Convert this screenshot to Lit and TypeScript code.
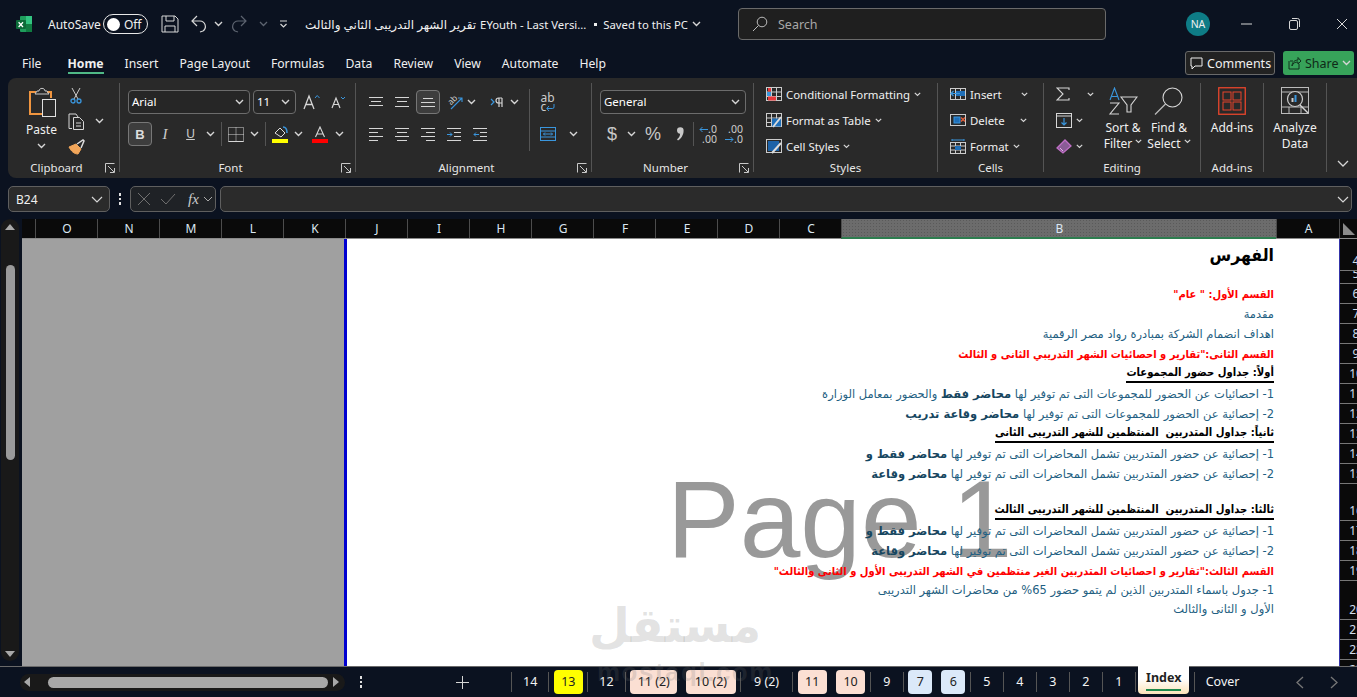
import { LitElement, css, html, svg } from "lit";
import { customElement } from "lit/decorators.js";

const UI = '#d6d6d6';
const BLUE = '#3a96dd';

const ic = (w: number, h: number, body: unknown) => html`<svg width=${w} height=${h} viewBox="0 0 ${w} ${h}" fill="none" stroke=${UI} stroke-width="1">${body}</svg>`;
const chev = () => ic(9, 6, svg`<path d="M1 1l3.5 3.5L8 1" stroke-width="1.4"/>`);
const chevS = () => ic(7, 5, svg`<path d="M.8 .8l2.700 2.700L6.200 .8" stroke-width="1.2"/>`);
const launcher = () => html`<span class="launch">${ic(10, 10, svg`<path d="M.5 9.5v-9h9M3 3l6 6M5 9.5h4.5V5" stroke="#c8c8c8"/>`)}</span>`;
const lines = (ys: number[], x: number[][]) => svg`${ys.map((y, i) => svg`<path d="M${x[i][0]} ${y}H${x[i][1]}"/>`)}`;

const icons = {
  excel: ic(18, 18, svg`<rect x="5" y="1" width="12" height="16" rx="1" fill="#1f9d5c" stroke="none"/><rect x="11" y="1" width="6" height="8" fill="#33c481" stroke="none"/><rect x="11" y="9" width="6" height="8" fill="#107c41" stroke="none"/><rect x="1" y="5" width="10" height="9" rx="1" fill="#0c6b38" stroke="none"/><path d="M3.6 7.2l4.4 4.8M8 7.2l-4.4 4.8" stroke="#fff" stroke-width="1.3"/>`),
  save: ic(18, 18, svg`<path d="M1 1h13l3 3v13H1zM5 1v5h8V1M4 17v-6h10v6"/>`),
  undo: ic(18, 18, svg`<path d="M7 1L2 6l5 5M2 6h8a5.500 5.500 0 0 1 3 10l-3 1" stroke-width="1.2"/>`),
  redo: ic(18, 18, svg`<path d="M11 1l5 5-5 5M16 6H8a5.500 5.500 0 0 0-3 10l3 1" stroke="#5d6470" stroke-width="1.2"/>`),
  customize: ic(9, 8, svg`<path d="M1 1h7M1.500 4l3 3 3-3" stroke-width="1.2"/>`),
  search: ic(16, 16, svg`<circle cx="10" cy="6" r="4.800" stroke="#bbb"/><path d="M6.500 9.500L1 15" stroke="#bbb"/>`),
  min: ic(11, 2, svg`<path d="M0 1h11"/>`),
  restore: ic(11, 12, svg`<rect x=".5" y="2.500" width="8" height="9" rx="1.500"/><path d="M3 .5h5.500a2 2 0 0 1 2 2V9"/>`),
  close: ic(12, 12, svg`<path d="M1 1l10 10M11 1L1 11"/>`),
  comment: ic(13, 13, svg`<path d="M1 1h11v8H5l-3 3V9H1z" stroke="#eee"/>`),
  share: ic(14, 14, svg`<path d="M2 5h3M1 5v8h10V8M4 10c0-4 3-6 6-6V1.500L13 5l-3 3V6c-3 0-5 1-6 4z" stroke="#10301c"/>`),
  paste: ic(28, 30, svg`<path d="M7 5H1v22h12" stroke="#f0953f" stroke-width="2"/><path d="M18 5h4v6" stroke="#f0953f" stroke-width="2"/><path d="M6 7l2-3h2c0-3.500 6-3.500 6 0h2l2 3z" stroke="#c8c8c8"/><rect x="13.500" y="12.500" width="13" height="17" stroke="#e0e0e0"/>`),
  cut: ic(12, 17, svg`<path d="M2 1l6 11M10 1L4 12" stroke="#ccc"/><circle cx="3" cy="14" r="2" stroke="${BLUE}" stroke-width="1.300"/><circle cx="9" cy="14" r="2" stroke="${BLUE}" stroke-width="1.300"/>`),
  copy: ic(17, 17, svg`<path d="M4 15.500H1V1h7l2 3"/><path d="M5.500 4.500h6l4 4v8h-10zM8 10h5M8 13h5"/>`),
  painter: ic(17, 16, svg`<path d="M1 8l7-3 5 5-3 5C6 15 3 12 1 8z" fill="#f2a65a" stroke="#f2a65a"/><path d="M9 5l6-4 1 1-3 7" stroke="#ddd" stroke-width="1.500"/>`),
  grow: ic(17, 16, svg`<path d="M1 15L6 2l5 13M3 10.500h6" stroke-width="1.300"/><path d="M12 4l2.200-2.500L16.500 4" stroke="${BLUE}"/>`),
  shrink: ic(15, 14, svg`<path d="M1 13L5 3l4 10M2.500 9.500h5" stroke-width="1.200"/><path d="M10 2l2 2 2-2" stroke="${BLUE}"/>`),
  italic: html`<span class="it">I</span>`,
  under: html`<span class="un">U</span>`,
  border: ic(16, 15, svg`<rect x=".5" y=".5" width="15" height="14" stroke-dasharray="1 1"/><path d="M8 .5v14M.5 7.500h15" stroke-dasharray="1 1"/><path d="M.5 14.500h15" stroke-width="1"/>`),
  fill: ic(17, 17, svg`<path d="M3 7l5-5 5 5-4 4z" stroke="#ddd"/><path d="M11 1c3 0 4 3 4 6" stroke="${BLUE}" stroke-width="1.500"/><rect y="13" width="16" height="4" fill="#ffff00" stroke="none"/>`),
  color: ic(17, 17, svg`<path d="M3.500 11L8 1l4.500 10M5 8h6" stroke-width="1.100"/><rect y="13" width="16" height="4" fill="#ff0000" stroke="none"/>`),
  alTop: ic(14, 12, lines([1.5, 5.5, 9.5], [[0, 14], [2, 12], [0, 14]])),
  alMid: ic(14, 12, lines([1.5, 5.5, 10.5], [[0, 14], [2, 12], [0, 14]])),
  alBot: ic(14, 12, lines([2.5, 6.5, 10.5], [[2, 12], [0, 14], [0, 14]])),
  left: ic(14, 13, lines([.5, 4.5, 8.5, 12.5], [[0, 14], [0, 9], [0, 14], [0, 9]])),
  center: ic(14, 13, lines([.5, 4.5, 8.5, 12.5], [[0, 14], [2, 12], [0, 14], [2, 12]])),
  right: ic(14, 13, lines([.5, 4.5, 8.5, 12.5], [[0, 14], [5, 14], [0, 14], [5, 14]])),
  indent: ic(14, 13, svg`${lines([.5, 4.5, 8.5, 12.5], [[0, 14], [7, 14], [7, 14], [0, 14]])}<path d="M0 6.500h5M3 4.500l2 2-2 2" stroke="${BLUE}"/>`),
  outdent: ic(14, 13, svg`${lines([.5, 4.5, 8.5, 12.5], [[0, 14], [7, 14], [7, 14], [0, 14]])}<path d="M6 6.500H1M3 4.500l-2 2 2 2" stroke="${BLUE}"/>`),
  orient: ic(17, 16, svg`<text x="2" y="9.500" font-size="8.500" font-family="Noto Sans, sans-serif" fill="#ccc" stroke="none" transform="rotate(-45 6 7)">ab</text><path d="M5 15L16 4M12 4h4v4" stroke="${BLUE}" stroke-width="1.100"/>`),
  rtl: ic(13, 10, svg`<path d="M1 2l3 3-3 3" stroke="${BLUE}" stroke-width="1.200"/><path d="M9 1v9M12 1v9M12 1H8.500a2.200 2.200 0 0 0 0 5H12" stroke-width="1.200"/>`),
  wrap: html`<span class="wrap">ab<br />c<svg width="9" height="8" viewBox="0 0 9 8" fill="none" stroke=${BLUE}><path d="M8 0v3a1.500 1.500 0 0 1-1.500 1.500H1M3 2L.8 4.500 3 7" /></svg></span>`,
  merge: ic(16, 14, svg`<rect x=".5" y=".5" width="15" height="13" stroke="${BLUE}" stroke-width="1"/><path d="M.5 4h15M.5 10h15M3.500 7h9M5 5.500L3.500 7 5 8.500M11 5.500L12.500 7 11 8.500" stroke="${BLUE}"/>`),
  dollar: html`<span class="num-ic">$</span>`,
  pct: html`<span class="num-ic">%</span>`,
  comma: ic(8, 14, svg`<path d="M1 3.500a3.300 3.300 0 1 1 6.600 0c0 4.500-2.400 8-5.600 10l-1-1.200c1.800-1.300 3-3 3.100-5.600A3.300 3.300 0 0 1 1 3.500z" fill="#c8c8c8" stroke="none"/>`),
  incDec: html`<span class="dec"><svg width="9" height="7" viewBox="0 0 9 7" fill="none" stroke=${BLUE}><path d="M9 3.500H1M3.500 1L1 3.500 3.500 6" /></svg>.0<br />.00</span>`,
  decDec: html`<span class="dec">.00<br /><svg width="9" height="7" viewBox="0 0 9 7" fill="none" stroke=${BLUE}><path d="M0 3.500h8M5.500 1L8 3.500 5.500 6" /></svg>.0</span>`,
  cond: ic(16, 14, svg`<rect x=".5" y=".5" width="15" height="13" stroke="#ccc"/><path d="M5.500 .5v13M10.500 .5v13M.5 5h15M.5 9.500h15" stroke="#ccc"/><rect x="2" y="1" width="3" height="3.500" fill="#e8383a" stroke="none"/><rect x="2" y="9.500" width="8" height="4" fill="#e8383a" stroke="none"/><rect x="1" y="5" width="4" height="4" fill="#3a96dd" stroke="none"/>`),
  table: ic(16, 15, svg`<rect x=".5" y=".5" width="15" height="13" stroke="#ccc"/><path d="M5.500 .5v13M10.500 .5v13M.5 5h15M.5 9.500h15" stroke="#ccc"/><rect x="6" y="5.500" width="9" height="8" fill="#1f6fb8" stroke="none"/><path d="M7 14L15 4" stroke="#ddd" stroke-width="2"/>`),
  styles: ic(16, 15, svg`<rect x=".5" y=".5" width="15" height="13" stroke="#ccc"/><rect x="2" y="2" width="11" height="10" fill="#1c62a8" stroke="none"/><path d="M6 14L15 4" stroke="#ddd" stroke-width="2"/>`),
  cellIns: ic(16, 14, svg`<rect x=".5" y="1.500" width="15" height="11" stroke="#ccc"/><path d="M5.500 1.500v11M10.500 1.500v11" stroke="#ccc"/><rect x="6" y="4" width="9" height="5" fill="#1f6fb8" stroke="none"/><path d="M10 6.500H1M3.500 4L1 6.500 3.500 9" stroke="${BLUE}" stroke-width="1.200"/>`),
  cellDel: ic(16, 14, svg`<rect x=".5" y="1.500" width="15" height="11" stroke="#ccc"/><rect x="4" y="4" width="6" height="6" fill="#1f6fb8" stroke="${BLUE}"/><path d="M11 4.500l4 4M15 4.500l-4 4" stroke="#e2603a" stroke-width="1.400"/>`),
  cellFmt: ic(16, 15, svg`<rect x=".5" y="3.500" width="15" height="11" stroke="#ccc"/><path d="M5.500 3.500v11M10.500 3.500v11M.5 7h15M.5 11h15" stroke="#ccc"/><rect x="5" y="7" width="6" height="4" fill="#1f6fb8" stroke="none"/><path d="M2 1h12M2 0v2M14 0v2" stroke="${BLUE}"/>`),
  sum: ic(14, 14, svg`<path d="M13 3V1H1l6 6-6 6h12v-2" stroke-width="1.100"/>`),
  fillDn: ic(16, 15, svg`<rect x=".5" y=".5" width="15" height="14"/><path d="M.5 3h15" /><path d="M8 5v7M5.500 9.500L8 12l2.500-2.500" stroke="${BLUE}" stroke-width="1.200"/>`),
  clear: ic(16, 15, svg`<path d="M1 9l8-8 6 6-8 7z" fill="#8a5c96" stroke="#c06fc6" stroke-width="1.300"/><path d="M4 9l3 3" stroke="#e4b3e8"/>`),
  sort: ic(30, 28, svg`<path d="M2 13L6.500 1 11 13M3.500 9.500h6" stroke="${BLUE}" stroke-width="1.100"/><path d="M2 16h9L2 27h9" stroke-width="1.100"/><path d="M13 10h16l-6 8v7h-4v-7z" stroke-width="1.100"/>`),
  find: ic(30, 28, svg`<circle cx="18.500" cy="10.500" r="9.500" stroke-width="1.100"/><path d="M11.500 17L1 27.500" stroke-width="1.300" stroke="#bbb"/>`),
  addins: ic(28, 28, svg`<rect x=".75" y=".75" width="26.500" height="26.500" stroke="#e8452c" stroke-width="1.300"/><rect x="5" y="5" width="8" height="8" stroke="#e8452c"/><rect x="15" y="5" width="8" height="8" stroke="#e8452c"/><rect x="5" y="15" width="8" height="8" stroke="#e8452c"/><rect x="15" y="15" width="8" height="8" stroke="#e8452c"/>`),
  analyze: ic(28, 28, svg`<rect x=".5" y=".5" width="27" height="26" stroke="#bbb"/><path d="M.5 5h27M.5 20h27M8 20v7M20 20v7" stroke="#bbb"/><circle cx="14" cy="12" r="7.500" fill="#292929" stroke="#ccc" stroke-width="1.200"/><path d="M19 18l8 8" stroke-width="1.500"/><rect x="10.500" y="11" width="2" height="4" fill="#ccc" stroke="none"/><rect x="13.500" y="8" width="2" height="7" fill="${BLUE}" stroke="none"/>`),
  collapse: ic(12, 7, svg`<path d="M1 1l5 5 5-5" stroke-width="1.300"/>`),
  cancel: ic(14, 14, svg`<path d="M1 1l12 12M13 1L1 13" stroke="#6f6f6f"/>`),
  enter: ic(16, 12, svg`<path d="M1 6l5 5L15 1" stroke="#6f6f6f"/>`),
  corner: ic(12, 12, svg`<path d="M0 0l12 12H0z" fill="#8a8a8a" stroke="none"/>`),
};

const colLetters = ['O', 'N', 'M', 'L', 'K', 'J', 'I', 'H', 'G', 'F', 'E', 'D', 'C'];

const ITEM1 = html`1- إحصائية عن حضور المتدربين تشمل المحاضرات التى تم توفير لها <b>محاضر فقط و</b>`;
const ITEM2 = html`2- إحصائية عن حضور المتدربين تشمل المحاضرات التى تم توفير لها <b>محاضر وقاعة</b>`;

const rows: { n: string; h: number; kind: string; text?: unknown }[] = [
  { n: '4', h: 32, kind: 'title', text: 'الفهرس' },
  { n: '5', h: 13, kind: '' },
  { n: '6', h: 20, kind: 'red', text: 'القسم الأول: " عام"' },
  { n: '7', h: 20, kind: 'blue', text: 'مقدمة' },
  { n: '8', h: 20, kind: 'blue', text: 'اهداف انضمام الشركة بمبادرة رواد مصر الرقمية' },
  { n: '9', h: 20, kind: 'red', text: 'القسم الثانى:"تقارير و احصائيات الشهر التدريبي الثانى و الثالث' },
  { n: '10', h: 20, kind: 'head', text: 'أولاً: جداول حضور المجموعات' },
  { n: '11', h: 20, kind: 'blue', text: html`1- احصائيات عن الحضور للمجموعات التى تم توفير لها <b>محاضر فقط</b> والحضور بمعامل الوزارة` },
  { n: '12', h: 20, kind: 'blue', text: html`2- إحصائية عن الحضور للمجموعات التى تم توفير لها <b>محاضر وقاعة تدريب</b>` },
  { n: '13', h: 20, kind: 'head', text: 'ثانياً: جداول المتدربين  المنتظمين للشهر التدريبى الثانى' },
  { n: '14', h: 20, kind: 'blue', text: ITEM1 },
  { n: '15', h: 20, kind: 'blue', text: ITEM2 },
  { n: '16', h: 37, kind: 'head low', text: 'ثالثا: جداول المتدربين  المنتظمين للشهر التدريبى الثالث' },
  { n: '17', h: 20, kind: 'blue', text: ITEM1 },
  { n: '18', h: 20, kind: 'blue', text: ITEM2 },
  { n: '19', h: 20, kind: 'red', text: 'القسم الثالث:"تقارير و احصائيات المتدربين الغير منتظمين في الشهر التدريبى الأول و الثانى والثالث"' },
  { n: '20', h: 39, kind: 'blue two', text: html`1- جدول باسماء المتدربين الذين لم يتمو حضور 65% من محاضرات الشهر التدريبى<br />الأول و الثانى والثالث` },
  { n: '21', h: 20, kind: '' },
  { n: '22', h: 20, kind: '' },
  { n: '23', h: 20, kind: '' },
];

const sheets: { t: string; c?: string; wide?: boolean }[] = [
  { t: '14' }, { t: '13', c: 'yellow' }, { t: '12' }, { t: '11 (2)', c: 'peach' }, { t: '10 (2)', c: 'peach', wide: true },
  { t: '9 (2)', wide: true }, { t: '11', c: 'peach' }, { t: '10', c: 'peach' }, { t: '9' }, { t: '7', c: 'sky' }, { t: '6', c: 'sky' },
  { t: '5' }, { t: '4' }, { t: '3' }, { t: '2' }, { t: '1' }, { t: 'Index', c: 'active' }, { t: 'Cover' },
];

@customElement("app-root")
export class AppRoot extends LitElement {
  static styles = css`
    :host {
      display: block;
      position: relative;
      width: 1357px;
      height: 697px;
      overflow: hidden;
      background: #0b1220;
      color: #f0f0f0;
      font-family: "Noto Sans", "Open Sans", "DejaVu Sans", sans-serif;
      font-size: 12px;
    }
    svg { display: block; }

    .titlebar {
      height: 48px;
      display: grid;
      grid-template-columns: 48px 55px 58px 29px 24px 16px 29px 20px 26px 433px 368px 116px 48px 48px 48px;
      align-items: center;
      box-sizing: border-box;
    }
    .xl { justify-self: end; margin-right: 15px; }
    .toggle {
      width: 45px;
      height: 20px;
      box-sizing: border-box;
      border: 1px solid #e8e8e8;
      border-radius: 10px;
      display: flex;
      align-items: center;
      gap: 4px;
      padding-left: 3px;
      font-size: 12px;
    }
    .knob { width: 13px; height: 13px; border-radius: 50%; background: #fff; }
    .doc { font-size: 11.3px; white-space: nowrap; display: flex; align-items: center; gap: 4px; }
    .doc .ar { font-size: 12px; }
    .doc .bullet { width: 3px; height: 3px; background: #eee; margin: 1px 2px 0 4px; }
    .search {
      box-sizing: border-box;
      height: 32px;
      width: 368px;
      background: #1f1f1f;
      border: 1px solid #6a6a6a;
      border-radius: 4px;
      display: flex;
      align-items: center;
      gap: 10px;
      padding-left: 13px;
      color: #a8a8a8;
      font-size: 12.5px;
    }
    .avatar-cell { display: flex; justify-content: flex-end; padding-right: 12px; }
    .avatar {
      width: 24px;
      height: 24px;
      border-radius: 50%;
      background: #0e7c86;
      font-size: 10.5px;
      display: flex;
      align-items: center;
      justify-content: center;
    }
    .win { display: flex; justify-content: center; }

    .tabs { height: 30px; display: flex; align-items: flex-start; padding-left: 22px; gap: 21px; font-size: 12.2px; }
    .tab { height: 24px; line-height: 31px; box-sizing: border-box; white-space: nowrap; }
    .tab.file { margin-right: 5px; }
    .tab.on { font-weight: 700; border-bottom: 2px solid #4fb987; height: 26px; }
    .actions { margin-left: auto; display: flex; gap: 8px; padding: 3px 3px 0 0; }
    .comments, .sharebtn {
      height: 24px;
      box-sizing: border-box;
      border-radius: 3px;
      display: flex;
      align-items: center;
      gap: 4px;
      font-size: 12.5px;
    }
    .comments { width: 90px; border: 1px solid #6a6a6a; background: #222; padding-left: 4px; }
    .sharebtn { width: 71px; background: #37a35a; color: #0f2a18; padding-left: 5px; gap: 3px; }

    .ribbon { height: 100px; margin-left: 8px; background: #292929; border-radius: 8px 0 0 8px; display: flex; }
    .sep { width: 1px; height: 89px; background: #545454; align-self: center; flex: none; margin-top: -1px; }
    .grp { display: flex; flex-direction: column; flex: none; box-sizing: border-box; }
    .body { height: 83px; box-sizing: border-box; }
    .lbl { display: flex; height: 14px; line-height: 14px; font-size: 11.5px; color: #e6e6e6; }
    .lbl span:first-child { flex: 1; text-align: center; }
    .launch { width: 14px; display: flex; align-items: center; }
    .g-clip { width: 111px; }
    .g-font { width: 235px; }
    .g-align { width: 235px; }
    .g-num { width: 161px; }
    .g-style { width: 183px; }
    .g-cell { width: 105px; }
    .g-edit { width: 156px; }
    .g-add, .g-an { width: 62px; }
    .g-end { flex: 1; display: flex; align-items: flex-end; justify-content: flex-start; padding: 0 0 11px 10px; }

    .clip-body { display: grid; grid-template-columns: 51px 18px 28px; grid-template-rows: repeat(3, 26px); padding: 4px 0 0 8px; justify-items: center; align-items: center; }
    .paste { grid-row: 1 / 4; display: flex; flex-direction: column; align-items: center; font-size: 12px; padding-top: 5px; align-self: start; line-height: 16px; }
    .paste svg:first-child { margin: 0 0 5px 3px; }
    .paste svg:last-child { margin-top: 5px; }

    .stack { padding-top: 12px; display: flex; flex-direction: column; gap: 8px; }
    .row { display: grid; height: 24px; align-items: center; justify-items: center; }
    .combo {
      box-sizing: border-box;
      height: 24px;
      border: 1px solid #6c6c6c;
      border-radius: 4px;
      background: #262626;
      display: flex;
      align-items: center;
      justify-content: space-between;
      padding: 0 5px 1px 3px;
      font-size: 11.5px;
      color: #fff;
    }
    .f-top { display: flex; padding-left: 8px; gap: 3px; align-items: center; }
    .c-font { width: 122px; }
    .c-size { width: 43px; }
    .grow { margin-left: 4px; }
    .shrink { margin-left: 8px; }
    .f-bot { grid-template-columns: 24px 26px 25px 14px 8px 22px 14px 8px 22px 14px 30px 8px; padding-left: 8px; }
    .vsep { width: 1px; height: 24px; background: #545454; }
    .btn-on { width: 24px; height: 24px; box-sizing: border-box; border: 1px solid #777; border-radius: 4px; background: #3d3d3d; display: flex; align-items: center; justify-content: center; }
    .bold { font-weight: 700; font-family: "Liberation Sans", sans-serif; font-size: 13px; color: #ddd; }
    .it { font-family: "Liberation Serif", serif; font-style: italic; font-size: 15px; color: #ccc; }
    .un { font-family: "Liberation Sans", sans-serif; font-size: 12px; text-decoration: underline; color: #ccc; }

    .a-body { display: flex; padding-left: 7px; }
    .a-top { grid-template-columns: 26px 26px 26px 26px 8px 10px 22px 14px; }
    .a-top svg { overflow: visible; }
    .a-bot { grid-template-columns: 26px 26px 26px 26px 26px; justify-content: start; }
    .a-sep { width: 1px; height: 62px; background: #545454; margin: 11px 0 0 8px; }
    .a-col { grid-template-columns: 36px 14px; }
    .wrap { font-size: 12px; line-height: 9px; color: #ccc; white-space: nowrap; }
    .wrap svg { display: inline-block; vertical-align: -1px; }

    .n-body { padding-left: 8px; }
    .c-gen { width: 146px; }
    .n-bot { grid-template-columns: 24px 14px 30px 24px 2px 28px 24px; }
    .num-ic { font-size: 18px; color: #c8c8c8; font-family: "Liberation Sans", sans-serif; }
    .dec { font-size: 10.5px; line-height: 10px; color: #ccc; text-align: right; white-space: nowrap; }
    .dec svg { display: inline-block; }

    .list { padding: 3px 0 0 12px; display: flex; flex-direction: column; }
    .li { height: 26px; display: flex; align-items: center; gap: 4px; white-space: nowrap; font-size: 11.4px; color: #f0f0f0; }
    .ins-chev { margin-left: 15px; }
    .del-chev { margin-left: 11px; }
    .e-body { display: flex; }
    .e-list { width: 56px; box-sizing: border-box; flex: none; }
    .sum-chev { margin-left: 13px; }
    .big {
      display: flex;
      flex-direction: column;
      align-items: center;
      padding-top: 9px;
      font-size: 12px;
      line-height: 16px;
      text-align: center;
      white-space: nowrap;
    }
    .big svg:first-child { margin-bottom: 5px; }
    .big .t { display: flex; align-items: center; gap: 3px; justify-content: center; }
    .e-big { width: 46px; }

    .fbar { height: 26px; margin: 8px 5px 7px 8px; display: flex; align-items: stretch; }
    .namebox, .fbtns, .finput { box-sizing: border-box; border: 1px solid #5f5f5f; border-radius: 5px; background: #2b2b2b; display: flex; align-items: center; }
    .namebox { width: 102px; justify-content: space-between; padding: 0 6px 0 7px; font-size: 12px; }
    .dots { width: 20px; display: flex; flex-direction: column; gap: 2px; align-items: center; justify-content: center; flex: none; }
    .dots i { width: 2.500px; height: 2.500px; background: #e0e0e0; }
    .fbtns { width: 86px; background: #1f2226; padding-left: 6px; gap: 9px; }
    .fx { font-family: "Liberation Serif", serif; font-style: italic; font-size: 15px; color: #ccc; margin-left: 3px; margin-right: -5px; }
    .finput { flex: 1; margin-left: 4px; justify-content: flex-end; padding-right: 2px; }

    .main { height: 447px; display: flex; border-bottom: 1px solid #6a6a6a; box-sizing: content-box; }
    .vs {
      width: 22px;
      flex: none;
      display: flex;
      flex-direction: column;
      align-items: center;
      padding-top: 5px;
      box-sizing: border-box;
    }
    .vs-in { width: 18px; height: 100%; background: #191919; border-radius: 9px; display: flex; flex-direction: column; align-items: center; margin-top: -5px; padding-top: 5px; box-sizing: border-box; margin-right: 2px; }
    .vs .up { width: 0; height: 0; border: 5px solid transparent; border-top: 0; border-bottom: 6px solid #a8a8a8; }
    .vs .thumb { width: 9px; height: 195px; border-radius: 5px; background: #9a9a9a; margin-top: 35px; }
    .vs .dn { width: 0; height: 0; border: 5px solid transparent; border-bottom: 0; border-top: 6px solid #a8a8a8; margin-top: auto; margin-bottom: 4px; }
    .grid { flex: 1; display: flex; flex-direction: column; min-width: 0; }
    .cols { height: 19px; display: flex; background: #0a0a0a; border-bottom: 1px solid #8a8a8a; box-sizing: content-box; flex: none; }
    .col { width: 62px; box-sizing: border-box; border-left: 1px solid #4c4c4c; padding-left: 1px; text-align: center; line-height: 19px; font-size: 12px; color: #dbe7f3; flex: none; }
    .col.p { width: 13px; border-left: 0; }
    .col.b {
      width: 435px;
      background-color: #6c6c6c;
      background-image: radial-gradient(#5a5a5a 1px, transparent 1px);
      background-size: 3px 3px;
      border-bottom: 2px solid #2e7d4f;
      height: 20px;
    }
    .col.a { width: 63px; }
    .corner { flex: 1; border-left: 1px solid #4c4c4c; padding: 4px 0 0 3px; }
    .canvas { flex: 1; display: flex; min-height: 0; overflow: hidden; }
    .outside { width: 322px; flex: none; background: #a0a0a0; border-right: 3px solid #0000d0; }
    .page {
      width: 992px;
      flex: none;
      background: #fff;
      border-right: 1px solid #3434a8;
      box-sizing: content-box;
      position: relative;
      overflow: hidden;
    }
    .page-no {
      position: absolute;
      left: 320px;
      top: 218px;
      font: 109px/1.15 "Liberation Sans", sans-serif;
      color: #999;
      white-space: nowrap;
    }
    .lines { position: relative; direction: rtl; }
    .ln {
      box-sizing: border-box;
      padding-right: 65px;
      display: flex;
      align-items: center;
      white-space: pre;
      overflow: hidden;
      font-family: "DejaVu Sans Condensed", "DejaVu Sans", sans-serif;
      font-stretch: condensed;
      font-size: 11px;
      color: #1f5f82;
    }
    .ln span { display: block; line-height: 19px; }
    .ln b { color: #16465f; }
    .ln.blue { font-family: "DejaVu Sans", sans-serif; font-stretch: normal; font-size: 11.5px; }
    .ln.title { color: #000; font-weight: 700; font-size: 17.5px; }
    .ln.red { color: #f00; font-weight: 700; font-size: 11.1px; }
    .ln.head { color: #000; font-weight: 700; font-size: 11.2px; }
    .ln.head span { border-bottom: 2px solid #000; line-height: 16px; }
    .ln.low { align-items: flex-end; padding-bottom: 1px; }
    .ln.two { align-items: flex-start; }
    .rowhead { flex: 1; background: #0a0a0a; overflow: hidden; min-width: 0; }
    .rh {
      width: 32px;
      box-sizing: border-box;
      border-bottom: 1px solid #777;
      display: flex;
      align-items: flex-end;
      justify-content: center;
      color: #cfdceb;
      font-size: 12px;
      line-height: 18px;
      overflow: hidden;
    }

    .bottom { height: 30px; display: flex; align-items: center; }
    .hs { width: 325px; height: 17px; margin-left: 20px; background: #191919; border-radius: 9px; display: flex; align-items: center; flex: none; }
    .tri-l { width: 0; height: 0; border: 5px solid transparent; border-left: 0; border-right: 6px solid #a8a8a8; margin-left: 4px; }
    .tri-r { width: 0; height: 0; border: 5px solid transparent; border-right: 0; border-left: 6px solid #a8a8a8; margin-left: 5px; }
    .hthumb { width: 280px; height: 11px; border-radius: 6px; background: #a8a8a8; margin-left: 18px; }
    .hdots { width: 32px; }
    .add { width: 42px; flex: none; margin-left: 64px; display: flex; justify-content: center; }
    .sheets { display: flex; align-items: center; margin-left: 23.5px; height: 30px; flex: none; }
    .sh-sep { width: 1px; height: 20px; background: #555; flex: none; margin: 0 4.500px; }
    .sh-sep.hide { background: transparent; width: 0; margin: 0 4.500px; }
    .sh { height: 24px; line-height: 24px; padding: 0 6.500px; box-sizing: border-box; font-size: 12.500px; color: #f4f4f4; border-radius: 4px; white-space: nowrap; text-align: center; min-width: 23px; flex: none; }
    .sh.wide { padding: 0 8.500px; }
    .sh.yellow { background: #ffff00; color: #222; width: 29px; padding: 0; }
    .sh.peach { background: #fbdfd3; color: #222; padding: 0 7.500px; }
    .sh.peach.wide { padding: 0 8.500px; }
    .sh.sky { background: #dbe9f9; color: #222; width: 24px; padding: 0; }
    .sh.active {
      background: linear-gradient(#fff 0%, #fff 45%, #fbe3b8 100%);
      color: #222;
      font-weight: 700;
      height: 28px;
      line-height: 24px;
      border-radius: 0 0 4px 4px;
      width: 51px;
      padding: 0;
      margin: -4px 0 0 -2px;
      position: relative;
    }
    .sh.active::after { content: ""; position: absolute; left: 8px; right: 8px; bottom: 3px; height: 2px; background: #1f8a4c; }
    .pager { margin-left: auto; display: flex; gap: 26px; padding-right: 19px; }

    .stamp {
      position: absolute;
      left: 597px;
      top: 592px;
      width: 164px;
      text-align: center;
      color: rgba(110, 110, 110, 0.2);
      pointer-events: none;
    }
    .stamp .ar { font: 700 47px/68px "DejaVu Sans", sans-serif; display: block; direction: rtl; white-space: nowrap; }
    .stamp .lat { font: 700 26px/24px "Liberation Sans", sans-serif; display: block; letter-spacing: 1.5px; white-space: nowrap; }
  `;

  render() {
    return html`
      <div class="titlebar">
        <div class="xl">${icons.excel}</div>
        <div>AutoSave</div>
        <div class="toggle"><i class="knob"></i>Off</div>
        <div>${icons.save}</div>
        <div>${icons.undo}</div>
        <div>${chev()}</div>
        <div>${icons.redo}</div>
        <div>${ic(9, 6, svg`<path d="M1 1l3.500 3.500L8 1" stroke="#5d6470" stroke-width="1.300"/>`)}</div>
        <div>${icons.customize}</div>
        <div class="doc"><span class="ar">تقرير الشهر التدريبى الثاني والثالث</span><span>EYouth - Last Versi...</span><i class="bullet"></i><span>Saved to this PC</span>${chev()}</div>
        <div class="search">${icons.search}Search</div>
        <div class="avatar-cell"><div class="avatar">NA</div></div>
        <div class="win">${icons.min}</div>
        <div class="win">${icons.restore}</div>
        <div class="win">${icons.close}</div>
      </div>

      <div class="tabs">
        <div class="tab file">File</div>
        <div class="tab on">Home</div>
        ${['Insert', 'Page Layout', 'Formulas', 'Data', 'Review', 'View', 'Automate', 'Help'].map(t => html`<div class="tab">${t}</div>`)}
        <div class="actions">
          <div class="comments">${icons.comment}Comments</div>
          <div class="sharebtn">${icons.share}Share ${chev()}</div>
        </div>
      </div>

      <div class="ribbon">
        <section class="grp g-clip">
          <div class="body clip-body">
            <div class="paste">${icons.paste}Paste${chev()}</div>
            <div>${icons.cut}</div><div></div>
            <div>${icons.copy}</div><div>${chev()}</div>
            <div>${icons.painter}</div><div></div>
          </div>
          <div class="lbl"><span>Clipboard</span>${launcher()}</div>
        </section>
        <i class="sep"></i>
        <section class="grp g-font">
          <div class="body stack">
            <div class="f-top">
              <div class="combo c-font">Arial ${chev()}</div>
              <div class="combo c-size">11 ${chev()}</div>
              <div class="grow">${icons.grow}</div>
              <div class="shrink">${icons.shrink}</div>
            </div>
            <div class="row f-bot">
              <div class="btn-on bold">B</div>
              ${icons.italic}
              ${icons.under}
              ${chev()}
              <i class="vsep"></i>
              ${icons.border}
              ${chev()}
              <i class="vsep"></i>
              ${icons.fill}
              ${chev()}
              ${icons.color}
              ${chev()}
            </div>
          </div>
          <div class="lbl"><span>Font</span>${launcher()}</div>
        </section>
        <i class="sep"></i>
        <section class="grp g-align">
          <div class="body a-body">
            <div class="stack">
              <div class="row a-top">
                ${icons.alTop}${icons.alMid}<div class="btn-on">${icons.alBot}</div>${icons.orient}${chev()}<i></i>${icons.rtl}${chev()}
              </div>
              <div class="row a-bot">${icons.left}${icons.center}${icons.right}${icons.indent}${icons.outdent}</div>
            </div>
            <i class="a-sep"></i>
            <div class="stack">
              <div class="row a-col">${icons.wrap}<i></i></div>
              <div class="row a-col">${icons.merge}${chev()}</div>
            </div>
          </div>
          <div class="lbl"><span>Alignment</span>${launcher()}</div>
        </section>
        <i class="sep"></i>
        <section class="grp g-num">
          <div class="body stack n-body">
            <div class="combo c-gen">General ${chev()}</div>
            <div class="row n-bot">
              ${icons.dollar}${chev()}${icons.pct}${icons.comma}<i class="vsep"></i>${icons.incDec}${icons.decDec}
            </div>
          </div>
          <div class="lbl"><span>Number</span>${launcher()}</div>
        </section>
        <i class="sep"></i>
        <section class="grp g-style">
          <div class="body list">
            <div class="li">${icons.cond}Conditional Formatting ${chevS()}</div>
            <div class="li">${icons.table}Format as Table ${chevS()}</div>
            <div class="li">${icons.styles}Cell Styles ${chevS()}</div>
          </div>
          <div class="lbl"><span>Styles</span></div>
        </section>
        <i class="sep"></i>
        <section class="grp g-cell">
          <div class="body list">
            <div class="li">${icons.cellIns}Insert <span class="ins-chev">${chevS()}</span></div>
            <div class="li">${icons.cellDel}Delete <span class="del-chev">${chevS()}</span></div>
            <div class="li">${icons.cellFmt}Format ${chevS()}</div>
          </div>
          <div class="lbl"><span>Cells</span></div>
        </section>
        <i class="sep"></i>
        <section class="grp g-edit">
          <div class="body e-body">
            <div class="list e-list">
              <div class="li">${icons.sum}<span class="sum-chev">${chevS()}</span></div>
              <div class="li">${icons.fillDn}${chevS()}</div>
              <div class="li">${icons.clear}${chevS()}</div>
            </div>
            <div class="big e-big">${icons.sort}<span>Sort &amp;</span><span class="t">Filter ${chevS()}</span></div>
            <div class="big e-big">${icons.find}<span>Find &amp;</span><span class="t">Select ${chevS()}</span></div>
          </div>
          <div class="lbl"><span>Editing</span></div>
        </section>
        <i class="sep"></i>
        <section class="grp g-add">
          <div class="body big">${icons.addins}<span>Add-ins</span></div>
          <div class="lbl"><span>Add-ins</span></div>
        </section>
        <i class="sep"></i>
        <section class="grp g-an">
          <div class="body big">${icons.analyze}<span>Analyze</span><span>Data</span></div>
          <div class="lbl"><span></span></div>
        </section>
        <i class="sep"></i>
        <section class="g-end">${icons.collapse}</section>
      </div>

      <div class="fbar">
        <div class="namebox">B24 ${ic(12, 7, svg`<path d="M1 1l5 5 5-5" stroke-width="1.200"/>`)}</div>
        <div class="dots"><i></i><i></i><i></i></div>
        <div class="fbtns">${icons.cancel}${icons.enter}<span class="fx">fx</span>${ic(10, 6, svg`<path d="M1 1l4 4 4-4" stroke="#aaa"/>`)}</div>
        <div class="finput">${ic(12, 7, svg`<path d="M1 1l5 5 5-5" stroke-width="1.200"/>`)}</div>
      </div>

      <div class="main">
        <div class="vs">
          <div class="vs-in"><i class="up"></i><i class="thumb"></i><i class="dn"></i></div>
        </div>
        <div class="grid">
          <div class="cols">
            <div class="col p"></div>
            ${colLetters.map(c => html`<div class="col">${c}</div>`)}
            <div class="col b">B</div>
            <div class="col a">A</div>
            <div class="corner">${icons.corner}</div>
          </div>
          <div class="canvas">
            <div class="outside"></div>
            <div class="page">
              <div class="page-no">Page 1</div>
              <div class="lines">
                ${rows.map(r => html`<div class="ln ${r.kind}" style="height:${r.h}px"><span>${r.text}</span></div>`)}
              </div>
            </div>
            <div class="rowhead">
              ${rows.map(r => html`<div class="rh" style="height:${r.h}px">${r.n}</div>`)}
            </div>
          </div>
        </div>
      </div>

      <div class="bottom">
        <div class="hs"><i class="tri-l"></i><i class="hthumb"></i><i class="tri-r"></i></div>
        <div class="dots hdots"><i></i><i></i><i></i></div>
        <div class="add">${ic(13, 13, svg`<path d="M6.500 0v13M0 6.500h13"/>`)}</div>
        <div class="sheets">
          ${sheets.map((s, i) => {
            const prev = i > 0 ? sheets[i - 1].c : undefined;
            const hide = !!s.c && s.c !== 'active' && !!prev && prev === s.c;
            return html`<i class="sh-sep ${hide ? 'hide' : ''}"></i><div class="sh ${s.c ?? ''} ${s.wide ? 'wide' : ''}">${s.t}</div>`;
          })}
        </div>
        <div class="pager">
          ${ic(8, 13, svg`<path d="M7 1L1 6.500 7 12" stroke="#777" stroke-width="1.300"/>`)}
          ${ic(8, 13, svg`<path d="M1 1l6 5.500L1 12" stroke="#777" stroke-width="1.300"/>`)}
        </div>
      </div>

      <div class="stamp"><span class="ar">مستقل</span><span class="lat">mostaql.com</span></div>
    `;
  }
}
